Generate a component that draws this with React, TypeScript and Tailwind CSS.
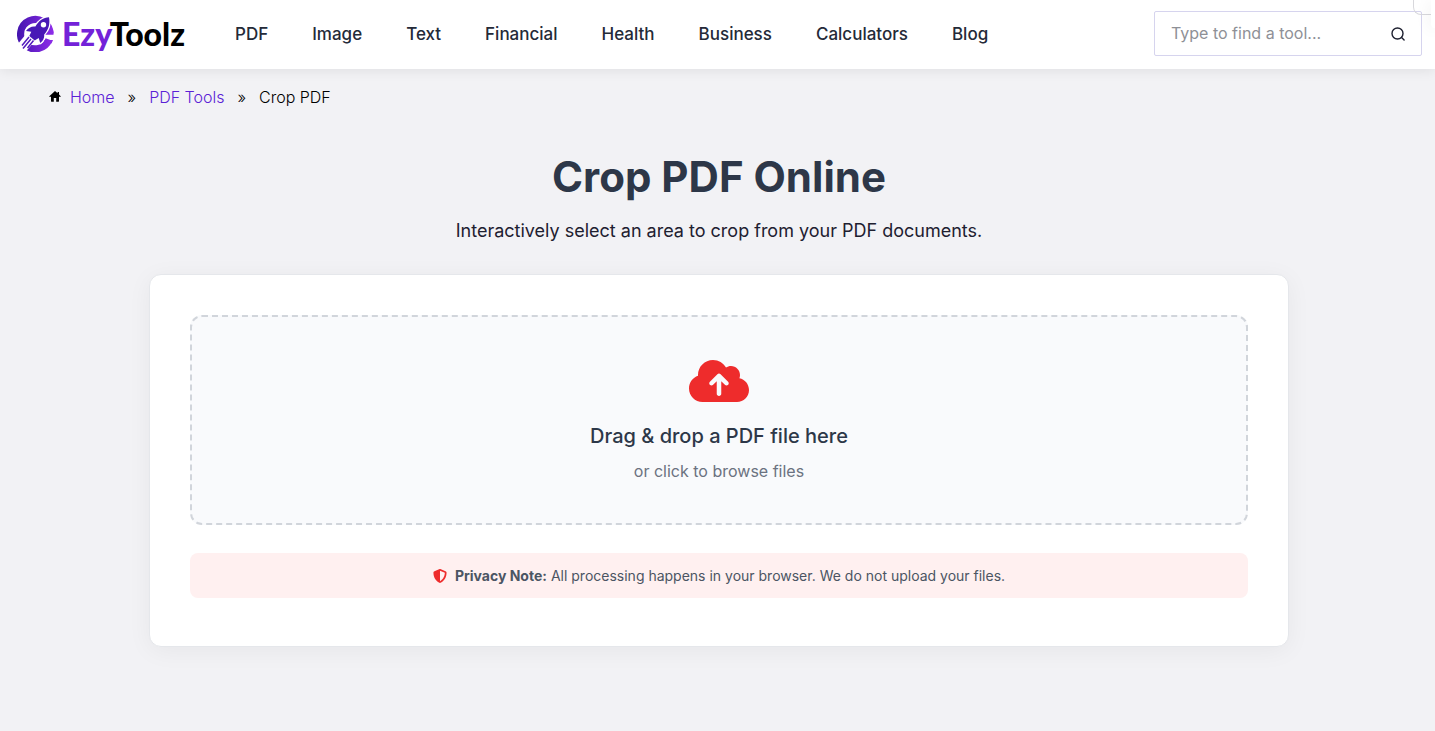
import React from "react";
import { FaCloudArrowUp, FaShieldHalved } from "react-icons/fa6";

const navItems = ["PDF", "Image", "Text", "Financial", "Health", "Business", "Calculators", "Blog"];

function LogoMark() {
  return (
    <svg viewBox="0 0 37 37" className="h-[37px] w-[37px] shrink-0" aria-hidden="true">
      <defs>
        <linearGradient id="mark" gradientUnits="userSpaceOnUse" x1="0" y1="0" x2="37" y2="0">
          <stop offset="0" stopColor="#4314ae" />
          <stop offset="1" stopColor="#8f2dea" />
        </linearGradient>
      </defs>
      <path d="M33 18.500A14.700 14.700 0 1 0 32 24.500" fill="none" stroke="url(#mark)" strokeWidth="7.200" />
      <path d="M26 15.200h10.200c.4 1.600.5 3 .3 4.500H24ZM25.500 25H36l-1.500 3.500-6.500-.5Z" fill="url(#mark)" />
      <path d="m15 20.500-11.500 14" stroke="#fff" strokeWidth="11" />
      <path
        fill="#4818b6"
        stroke="#fff"
        strokeWidth="2.600"
        strokeLinejoin="round"
        paintOrder="stroke"
        d="M32 2.300c-5.600.3-10.300 3.500-13.600 9.200-3.800-.5-6.900 1-9.400 4.500l5.300.7-2 4.300 5.400 4.500 4-2.500 1.500 5c3-2.200 4.300-4.900 4-8.600C31.500 15 33.300 9.300 32 2.300Z"
      />
      <circle cx="26.500" cy="9.700" r="2.700" fill="#fff" />
      <path d="M12 22 5 30.500M14 24 6 33.500M16.500 25.500 10.500 33" fill="none" stroke="#5119bd" strokeWidth="1.500" />
    </svg>
  );
}

function HomeIcon() {
  return (
    <svg viewBox="0 0 12 11" className="mb-[2px] h-[11px] w-3" aria-hidden="true">
      <path d="M6 0 .3 5.200c-.3.300-.2.600.2.600H2v4.400c0 .3.200.5.500.5h2.300V7h2.400v3.700h2.300c.3 0 .5-.2.500-.5V5.800h1.500c.4 0 .5-.3.200-.6L10 3.500V1H8.600v1.200Z" />
    </svg>
  );
}

function SearchIcon() {
  return (
    <svg viewBox="0 0 14 14" className="h-[14px] w-[14px]" fill="none" stroke="#1e2030" strokeWidth="1.400" strokeLinecap="round" aria-hidden="true">
      <circle cx="6.500" cy="6.500" r="5.500" />
      <path d="m10.600 10.600 2.500 2.500" />
    </svg>
  );
}

export default function App() {
  return (
    <div className="relative min-h-screen overflow-hidden bg-[#f2f2f5] font-['Inter',sans-serif] text-[#1e2030]">
      <header className="relative flex h-[69px] items-center justify-between bg-white pr-[13px] pb-[2px] pl-[17px] shadow-[0_2px_12px_rgba(0,0,0,0.08)]">
        <div className="flex items-center">
          <a href="#" className="flex items-center gap-2 font-['Lato',sans-serif] text-[32px] leading-[38px] font-black text-black">
            <LogoMark />
            <span>
              <span className="text-[#7322d8]">Ezy</span>Toolz
            </span>
          </a>
          <nav className="ml-[50px] flex gap-11 text-[17px] leading-6 font-medium text-[#242a38]" aria-label="Main">
            {navItems.map((item) => (
              <a key={item} href="#">
                {item}
              </a>
            ))}
          </nav>
        </div>
        <form role="search" className="flex h-[45px] w-[268px] items-center rounded-[2px] border border-[#d6d4ee] px-4">
          <input
            type="search"
            aria-label="Find a tool"
            placeholder="Type to find a tool..."
            className="min-w-0 flex-1 bg-transparent pb-[2px] text-base outline-none placeholder:text-[#8e9096]"
          />
          <button type="button" aria-label="Search">
            <SearchIcon />
          </button>
        </form>
      </header>

      <nav aria-label="Breadcrumb" className="flex items-center pt-4 pl-[49px] text-base leading-6 font-light text-black">
        <HomeIcon />
        <a href="#" className="ml-[9px] text-[#5b21d6]">Home</a>
        <span className="mx-[13px]">»</span>
        <a href="#" className="text-[#5b21d6]">PDF Tools</a>
        <span className="mx-[13px]">»</span>
        <span>Crop PDF</span>
      </nav>

      <div className="pl-[3px]">
        <main className="mx-auto flex w-full max-w-[1140px] flex-col items-center pt-10">
          <h1 className="text-[42px] leading-[56px] font-bold text-[#2d3748]">Crop PDF Online</h1>
          <p className="mt-3 text-lg leading-7">Interactively select an area to crop from your PDF documents.</p>

          <section className="mt-[29px] w-full rounded-xl border border-[#e5e7eb] bg-white px-10 pt-10 pb-12 shadow-[0_4px_25px_rgba(0,0,0,0.05)]">
            <button
              type="button"
              className="flex w-full flex-col items-center rounded-xl border-2 border-dashed border-[#d1d5db] bg-[#f9fafc] py-10"
            >
              <FaCloudArrowUp className="h-12 w-[60px] text-[#ee2c2c]" aria-hidden="true" />
              <span className="mt-4 text-xl leading-[30px] font-medium text-[#2d3748]">Drag &amp; drop a PDF file here</span>
              <span className="mt-2 text-base leading-6 text-[#6b7280]">or click to browse files</span>
            </button>
            <p className="mt-7 flex items-center justify-center gap-2 rounded-lg bg-[#fff0f0] py-3 text-sm leading-[21px] text-[#4b5563]">
              <FaShieldHalved className="size-3.5 text-[#ee2c2c]" aria-hidden="true" />
              <span>
                <strong className="font-bold">Privacy Note:</strong> All processing happens in your browser. We do not upload your files.
              </span>
            </p>
          </section>
        </main>
      </div>

      <div className="absolute top-0 right-0 h-[15px] w-[22px] rounded-bl-lg border-b border-l border-[#d8d8dc]" />
      <div className="absolute top-0 right-0 h-7 w-1 rounded-bl-lg bg-white shadow-[0_2px_15px_rgba(0,0,0,0.12)]" />
    </div>
  );
}
